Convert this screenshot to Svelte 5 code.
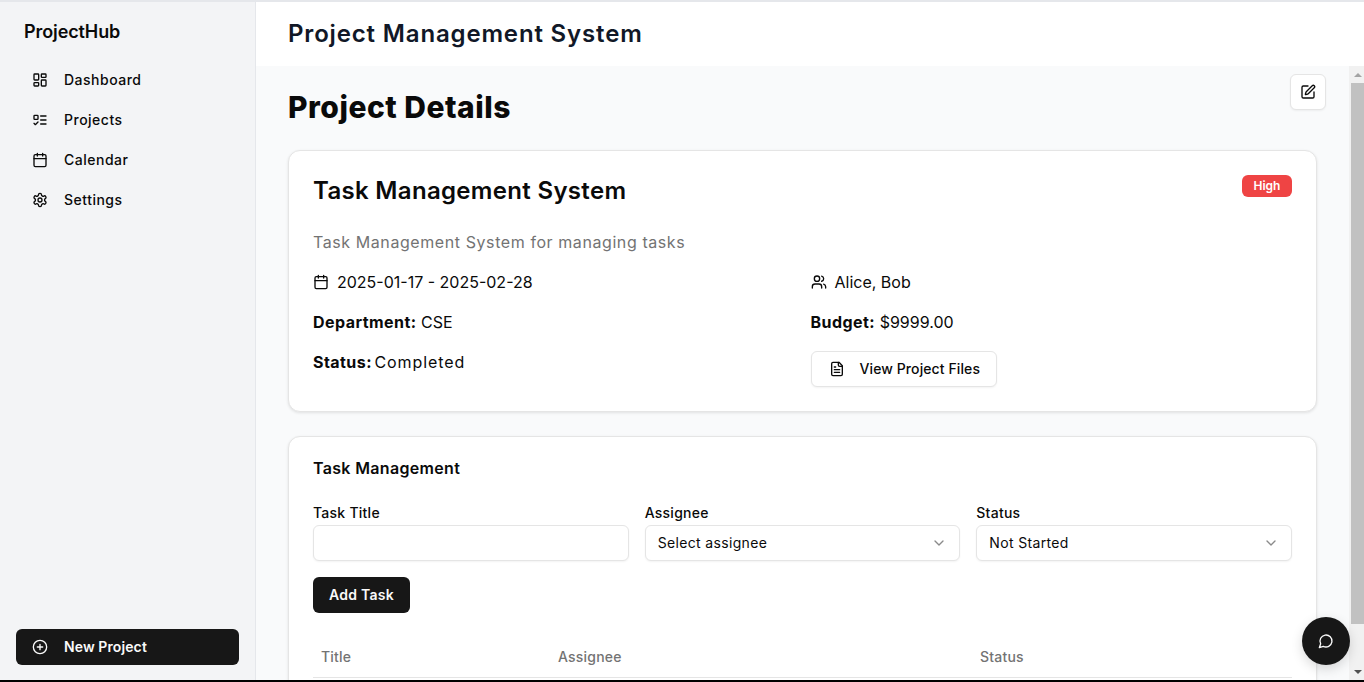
<script>
  const nav = [
    { label: 'Dashboard', icon: 'dash' },
    { label: 'Projects', icon: 'list' },
    { label: 'Calendar', icon: 'cal' },
    { label: 'Settings', icon: 'gear' }
  ];
</script>

<div class="page">
  <aside class="sidebar">
    <div class="logo">ProjectHub</div>
    <nav>
      {#each nav as item}
        <a class="nav-item" href="#top">
          <svg class="ic" viewBox="0 0 24 24">
            {#if item.icon === 'dash'}
              <rect x="3" y="3" width="7" height="9" rx="1"/><rect x="14" y="3" width="7" height="5" rx="1"/><rect x="14" y="12" width="7" height="9" rx="1"/><rect x="3" y="16" width="7" height="5" rx="1"/>
            {:else if item.icon === 'list'}
              <rect x="3" y="5" width="6" height="6" rx="1"/><path d="m3 17 2 2 4-4M13 6h8M13 12h8M13 18h8"/>
            {:else if item.icon === 'cal'}
              <path d="M8 2v4M16 2v4"/><rect x="3" y="4" width="18" height="18" rx="2"/><path d="M3 10h18"/>
            {:else}
              <path d="M12.22 2h-.44a2 2 0 0 0-2 2v.18a2 2 0 0 1-1 1.73l-.43.25a2 2 0 0 1-2 0l-.15-.08a2 2 0 0 0-2.73.73l-.22.38a2 2 0 0 0 .73 2.73l.15.1a2 2 0 0 1 1 1.72v.51a2 2 0 0 1-1 1.74l-.15.09a2 2 0 0 0-.73 2.73l.22.38a2 2 0 0 0 2.73.73l.15-.08a2 2 0 0 1 2 0l.43.25a2 2 0 0 1 1 1.73V20a2 2 0 0 0 2 2h.44a2 2 0 0 0 2-2v-.18a2 2 0 0 1 1-1.73l.43-.25a2 2 0 0 1 2 0l.15.08a2 2 0 0 0 2.73-.73l.22-.39a2 2 0 0 0-.73-2.73l-.15-.08a2 2 0 0 1-1-1.74v-.5a2 2 0 0 1 1-1.74l.15-.09a2 2 0 0 0 .73-2.73l-.22-.38a2 2 0 0 0-2.73-.73l-.15.08a2 2 0 0 1-2 0l-.43-.25a2 2 0 0 1-1-1.73V4a2 2 0 0 0-2-2z"/><circle cx="12" cy="12" r="3"/>
            {/if}
          </svg>
          <span>{item.label}</span>
        </a>
      {/each}
    </nav>
    <button class="new-project">
      <svg class="ic" viewBox="0 0 24 24"><circle cx="12" cy="12" r="10"/><path d="M8 12h8M12 8v8"/></svg>
      <span class="lift">New Project</span>
    </button>
  </aside>

  <div class="content">
    <header class="topbar"><h1>Project Management System</h1></header>
    <main class="main">
      <div class="scroll-body">
        <h2 class="page-title">Project Details</h2>

        <section class="card details">
          <div class="title-row">
            <h3>Task Management System</h3>
            <span class="badge">High</span>
          </div>
          <p class="desc">Task Management System for managing tasks</p>
          <div class="facts">
            <div class="fact">
              <svg class="ic" viewBox="0 0 24 24"><path d="M8 2v4M16 2v4"/><rect x="3" y="4" width="18" height="18" rx="2"/><path d="M3 10h18"/></svg>
              <span>2025-01-17 - 2025-02-28</span>
            </div>
            <div class="fact">
              <svg class="ic" viewBox="0 0 24 24"><path d="M16 21v-2a4 4 0 0 0-4-4H6a4 4 0 0 0-4 4v2"/><circle cx="9" cy="7" r="4"/><path d="M22 21v-2a4 4 0 0 0-3-3.87M16 3.13a4 4 0 0 1 0 7.75"/></svg>
              <span>Alice, Bob</span>
            </div>
            <div class="fact"><span><b>Department:</b> CSE</span></div>
            <div class="fact"><span><b>Budget:</b> $9999.00</span></div>
            <div class="fact"><span><b>Status:</b> <span class="wide">Completed</span></span></div>
            <div>
              <button class="outline">
                <svg class="ic" viewBox="0 0 24 24"><path d="M15 2H6a2 2 0 0 0-2 2v16a2 2 0 0 0 2 2h12a2 2 0 0 0 2-2V7z"/><path d="M14 2v4a2 2 0 0 0 2 2h4M10 9H8M16 13H8M16 17H8"/></svg>
                <span class="lift">View Project Files</span>
              </button>
            </div>
          </div>
        </section>

        <section class="card tasks">
          <h4>Task Management</h4>
          <div class="form-grid">
            <div class="field">
              <span class="label">Task Title</span>
              <input class="control" type="text" />
            </div>
            <div class="field">
              <span class="label">Assignee</span>
              <div class="control select">
                <span class="lift">Select assignee</span>
                <svg class="chev" viewBox="0 0 24 24"><path d="m6 9 6 6 6-6"/></svg>
              </div>
            </div>
            <div class="field">
              <span class="label">Status</span>
              <div class="control select">
                <span class="lift">Not Started</span>
                <svg class="chev" viewBox="0 0 24 24"><path d="m6 9 6 6 6-6"/></svg>
              </div>
            </div>
          </div>
          <button class="primary">Add Task</button>
          <div class="thead">
            <span>Title</span>
            <span>Assignee</span>
            <span>Status</span>
          </div>
        </section>
      </div>

      <button class="edit-btn" aria-label="Edit">
        <svg class="ic" viewBox="0 0 24 24"><path d="M12 3H5a2 2 0 0 0-2 2v14a2 2 0 0 0 2 2h14a2 2 0 0 0 2-2v-7"/><path d="M18.375 2.625a1 1 0 0 1 3 3l-9.013 9.014a2 2 0 0 1-.853.505l-2.873.84a.5.5 0 0 1-.62-.62l.84-2.873a2 2 0 0 1 .506-.852z"/></svg>
      </button>

      <div class="scrollbar">
        <i class="arrow up"></i>
        <div class="thumb"></div>
        <i class="arrow down"></i>
      </div>
    </main>
  </div>

  <button class="chat" aria-label="Chat">
    <svg class="ic" viewBox="0 0 24 24"><path d="M7.9 20A9 9 0 1 0 4 16.1L2 22z"/></svg>
  </button>
</div>

<style>
  :global(body) {
    background: #000;
    font-family: "Inter", "Open Sans", sans-serif;
    color: #0a0a0a;
  }

  .page {
    position: relative;
    display: flex;
    height: 680px;
    box-sizing: border-box;
    border-top: 2px solid #e5e7eb;
    overflow: hidden;
    background: #fff;
  }

  .ic {
    width: 16px;
    height: 16px;
    flex: none;
    fill: none;
    stroke: currentColor;
    stroke-width: 2;
    stroke-linecap: round;
    stroke-linejoin: round;
  }

  /* Inter sits a pixel lower than the original face inside controls */
  .lift {
    margin-top: -2px;
  }

  .sidebar {
    width: 256px;
    flex: none;
    box-sizing: border-box;
    display: flex;
    flex-direction: column;
    background: #f3f4f6;
    border-right: 1px solid #e5e7eb;
    padding: 15px 16px 16px;
  }

  .logo {
    padding-left: 8px;
    font-size: 18px;
    font-weight: 600;
    line-height: 30px;
    letter-spacing: -0.1px;
  }

  nav {
    display: flex;
    flex-direction: column;
    margin-top: 13px;
  }

  .nav-item {
    display: flex;
    align-items: center;
    gap: 16px;
    height: 40px;
    padding-left: 16px;
    color: inherit;
    text-decoration: none;
    font-size: 14px;
    font-weight: 500;
    letter-spacing: 0.5px;
  }

  .nav-item span {
    margin-top: -2px;
  }

  .new-project {
    margin-top: auto;
    margin-bottom: -1px;
    display: flex;
    align-items: center;
    gap: 16px;
    width: 223px;
    height: 36px;
    padding: 0 16px;
    border: 0;
    border-radius: 6px;
    background: #171717;
    color: #fafafa;
    font: 600 14px "Inter", sans-serif;
    letter-spacing: 0.1px;
  }

  .content {
    flex: 1;
    min-width: 0;
    display: flex;
    flex-direction: column;
  }

  .topbar {
    height: 64px;
    flex: none;
    display: flex;
    align-items: center;
    padding-left: 32px;
    background: #fff;
  }

  h1 {
    margin: -2px 0 0;
    font-size: 24px;
    font-weight: 600;
    letter-spacing: 0.84px;
    color: #111827;
  }

  .main {
    position: relative;
    flex: 1;
    min-height: 0;
    overflow: hidden;
    background: #f9fafb;
    display: flex;
  }

  .scroll-body {
    flex: 1;
    min-width: 0;
    padding: 21px 47px 0 32px;
  }

  .page-title {
    margin: 0 0 23px;
    font-size: 30px;
    line-height: 40px;
    font-weight: 800;
    letter-spacing: 0.5px;
  }

  .card {
    box-sizing: border-box;
    background: #fff;
    border: 1px solid #e5e5e5;
    border-radius: 12px;
    box-shadow: 0 1px 3px rgba(0, 0, 0, 0.1);
    padding: 24px;
    margin-bottom: 24px;
  }

  .details {
    height: 262px;
  }

  .title-row {
    display: flex;
    justify-content: space-between;
    align-items: flex-start;
  }

  h3 {
    margin: 0;
    font-size: 24px;
    line-height: 32px;
    font-weight: 600;
    letter-spacing: 0.32px;
  }

  .badge {
    box-sizing: border-box;
    height: 22px;
    width: 50px;
    padding-bottom: 2px;
    display: flex;
    align-items: center;
    justify-content: center;
    border-radius: 6px;
    background: #ef4444;
    color: #fff;
    font-size: 12px;
    font-weight: 600;
  }

  .desc {
    margin: 23px 0 0;
    font-size: 16px;
    line-height: 24px;
    letter-spacing: 0.58px;
    color: #737373;
  }

  .facts {
    display: grid;
    grid-template-columns: 1fr 1fr;
    column-gap: 16px;
    row-gap: 16px;
    align-items: start;
    margin-top: 16px;
  }

  .fact {
    display: flex;
    align-items: center;
    gap: 8px;
    font-size: 16px;
    line-height: 24px;
  }

  .fact b {
    font-weight: 700;
    letter-spacing: 0.45px;
  }

  .wide {
    margin-left: -2px;
    letter-spacing: 0.9px;
  }

  .outline {
    display: inline-flex;
    align-items: center;
    gap: 15px;
    width: 186px;
    height: 36px;
    margin-top: 1px;
    padding: 0 0 0 17px;
    background: #fff;
    color: inherit;
    border: 1px solid #e5e5e5;
    border-radius: 6px;
    box-shadow: 0 1px 2px rgba(0, 0, 0, 0.05);
    font: 500 14px "Inter", sans-serif;
    letter-spacing: 0.1px;
  }

  .tasks {
    height: 400px;
    padding-top: 19px;
  }

  h4 {
    margin: 0;
    font-size: 16px;
    line-height: 24px;
    font-weight: 600;
    letter-spacing: 0.33px;
  }

  .form-grid {
    display: grid;
    grid-template-columns: repeat(3, 1fr);
    gap: 16px;
    margin-top: 23px;
  }

  .field {
    display: flex;
    flex-direction: column;
    gap: 2px;
  }

  .label {
    font-size: 14px;
    line-height: 20px;
    font-weight: 500;
    letter-spacing: 0.25px;
  }

  .control {
    box-sizing: border-box;
    width: 100%;
    height: 36px;
    border: 1px solid #e5e5e5;
    border-radius: 6px;
    background: #fff;
    box-shadow: 0 1px 2px rgba(0, 0, 0, 0.05);
  }

  .select {
    display: flex;
    align-items: center;
    justify-content: space-between;
    padding: 0 12px;
    font-size: 14px;
    letter-spacing: 0.34px;
  }

  .chev {
    width: 16px;
    height: 16px;
    fill: none;
    stroke: #8a8a8a;
    stroke-width: 2;
    stroke-linecap: round;
    stroke-linejoin: round;
  }

  .primary {
    display: block;
    margin-top: 16px;
    height: 36px;
    width: 97px;
    padding: 0 0 2px;
    border: 0;
    border-radius: 6px;
    background: #171717;
    color: #fafafa;
    font: 600 14px "Inter", sans-serif;
    letter-spacing: 0.25px;
  }

  .thead {
    display: grid;
    grid-template-columns: 237px 422px 1fr;
    margin-top: 24px;
    padding: 0 8px 2px;
    height: 41px;
    box-sizing: border-box;
    align-items: center;
    border-bottom: 1px solid #e5e5e5;
    font-size: 14px;
    font-weight: 500;
    letter-spacing: 0.2px;
    color: #737373;
  }

  .edit-btn {
    position: absolute;
    top: 8px;
    right: 38px;
    width: 36px;
    height: 36px;
    display: flex;
    align-items: center;
    justify-content: center;
    padding: 0;
    background: #fff;
    color: #0a0a0a;
    border: 1px solid #e5e5e5;
    border-radius: 6px;
    box-shadow: 0 1px 2px rgba(0, 0, 0, 0.05);
  }

  .scrollbar {
    position: absolute;
    top: 0;
    bottom: 0;
    right: 0;
    width: 15px;
    box-sizing: border-box;
    padding-left: 2px;
    display: flex;
    flex-direction: column;
    background: #f1f1f1;
  }

  .arrow {
    height: 17px;
    flex: none;
    display: flex;
    align-items: center;
    justify-content: center;
  }

  .arrow::after {
    content: "";
    border-left: 4px solid transparent;
    border-right: 4px solid transparent;
  }

  .arrow.up::after {
    border-bottom: 4px solid #a3a3a3;
  }

  .arrow.down::after {
    border-top: 4px solid #505050;
  }

  .thumb {
    flex: 1;
    margin-bottom: 39px;
    background: #c1c1c1;
  }

  .chat {
    position: absolute;
    right: 14px;
    bottom: 15px;
    width: 48px;
    height: 48px;
    display: flex;
    align-items: center;
    justify-content: center;
    padding: 0;
    border: 0;
    border-radius: 50%;
    background: #171717;
    color: #fafafa;
    box-shadow: 0 4px 12px rgba(0, 0, 0, 0.15);
  }
</style>
